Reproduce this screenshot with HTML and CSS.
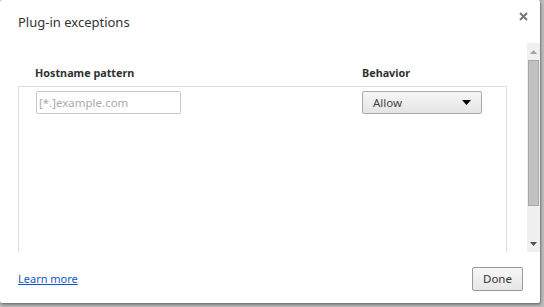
FILE: index.html
```html
<!DOCTYPE html>
<html>
<head>
<meta charset="utf-8">
<link rel="stylesheet" href="styles.css">
</head>
<body>
<div class="dialog">
  <div class="title">Plug-in exceptions</div>
  <button class="close" aria-label="Close">
    <svg width="9" height="9" viewBox="0 0 9 9"><path d="M1 1L8 8M8 1L1 8" stroke="#777" stroke-width="2"/></svg>
  </button>
  <div class="body">
    <div class="content">
      <div class="cols head">
        <div>Hostname pattern</div>
        <div>Behavior</div>
      </div>
      <div class="list">
        <div class="cols row">
          <div><input class="pattern" type="text" placeholder="[*.]example.com"></div>
          <div class="select"><span>Allow</span><svg width="9" height="5" viewBox="0 0 9 5"><path d="M0 0H9L4.5 5Z" fill="#000"/></svg></div>
        </div>
      </div>
    </div>
    <div class="scrollbar">
      <div class="arrow"><svg width="7" height="4" viewBox="0 0 7 4"><path d="M0 4H7L3.5 0Z" fill="#a3a3a3"/></svg></div>
      <div class="track"><div class="thumb"></div></div>
      <div class="arrow"><svg width="7" height="4" viewBox="0 0 7 4"><path d="M0 0H7L3.5 4Z" fill="#505050"/></svg></div>
    </div>
  </div>
  <div class="footer">
    <a href="#" class="learn">Learn more</a>
    <button class="done">Done</button>
  </div>
</div>
</body>
</html>
```
FILE: styles.css
```css
html, body {
  margin: 0;
  padding: 0;
  background: #bdbdbd;
  height: 307px;
  overflow: hidden;
}
body {
  font-family: "Noto Sans", "Open Sans", sans-serif;
  font-size: 11px;
  color: #333;
}
.dialog {
  position: relative;
  width: 540px;
  height: 303px;
  background: #fff;
  border-radius: 2px;
  box-shadow: 0 0 0 1px rgba(0,0,0,0.08), 1px 2px 3px rgba(0,0,0,0.35);
  display: flex;
  flex-direction: column;
}
.title {
  height: 43px;
  box-sizing: border-box;
  padding: 12px 0 0 18px;
  font-size: 13px;
  line-height: 20px;
  color: #333;
}
.close {
  position: absolute;
  top: 10px;
  right: 10px;
  width: 13px;
  height: 13px;
  padding: 0;
  border: 0;
  background: none;
  display: flex;
  align-items: center;
  justify-content: center;
}
.body {
  height: 209px;
  display: flex;
}
.content {
  flex: 1;
  display: flex;
  flex-direction: column;
  padding: 0 20px 0 18px;
}
.cols {
  display: grid;
  grid-template-columns: 326px 1fr;
}
.head {
  margin-top: 21px;
  height: 18px;
  line-height: 18px;
  margin-bottom: 4px;
  padding-left: 17px;
  font-weight: bold;
  font-size: 10.8px;
  color: #303030;
}
.head div:last-child {
  padding-left: 1px;
}
.list {
  flex: 1;
  border: 1px solid #dcdcdc;
  border-bottom: 0;
}
.row {
  padding: 4px 0 0 17px;
}
.pattern {
  box-sizing: border-box;
  width: 145px;
  height: 23px;
  border: 1px solid #c8c8c8;
  border-radius: 2px;
  padding: 0 1px 0 2px;
  font: inherit;
  font-size: 11.5px;
  color: #333;
  outline: none;
}
.pattern::placeholder {
  color: #aaa;
}
.select {
  box-sizing: border-box;
  width: 120px;
  height: 23px;
  border: 1px solid #aaa;
  border-radius: 2px;
  background: linear-gradient(#f6f6f6, #e4e4e4);
  display: flex;
  align-items: center;
  justify-content: space-between;
  padding: 0 10px 0 10px;
  font-size: 11.5px;
  color: #444;
}
.scrollbar {
  width: 13px;
  background: #f0f0f0;
  display: flex;
  flex-direction: column;
}
.arrow {
  height: 17px;
  display: flex;
  align-items: center;
  justify-content: center;
}
.track {
  flex: 1;
  padding: 0 1px;
}
.thumb {
  height: 146px;
  box-sizing: border-box;
  background: #c1c1c1;
  border: 1px solid #a8a8a8;
}
.footer {
  flex: 1;
  display: flex;
  align-items: center;
  justify-content: space-between;
  padding: 2px 17px 0 18px;
}
.learn {
  color: #1155cc;
  text-decoration: underline;
}
.done {
  box-sizing: border-box;
  height: 24px;
  width: 51px;
  border: 1px solid #999;
  border-radius: 2px;
  background: linear-gradient(#f7f7f7, #e6e6e6);
  font: inherit;
  font-size: 11.5px;
  color: #333;
  padding: 0;
}
```
